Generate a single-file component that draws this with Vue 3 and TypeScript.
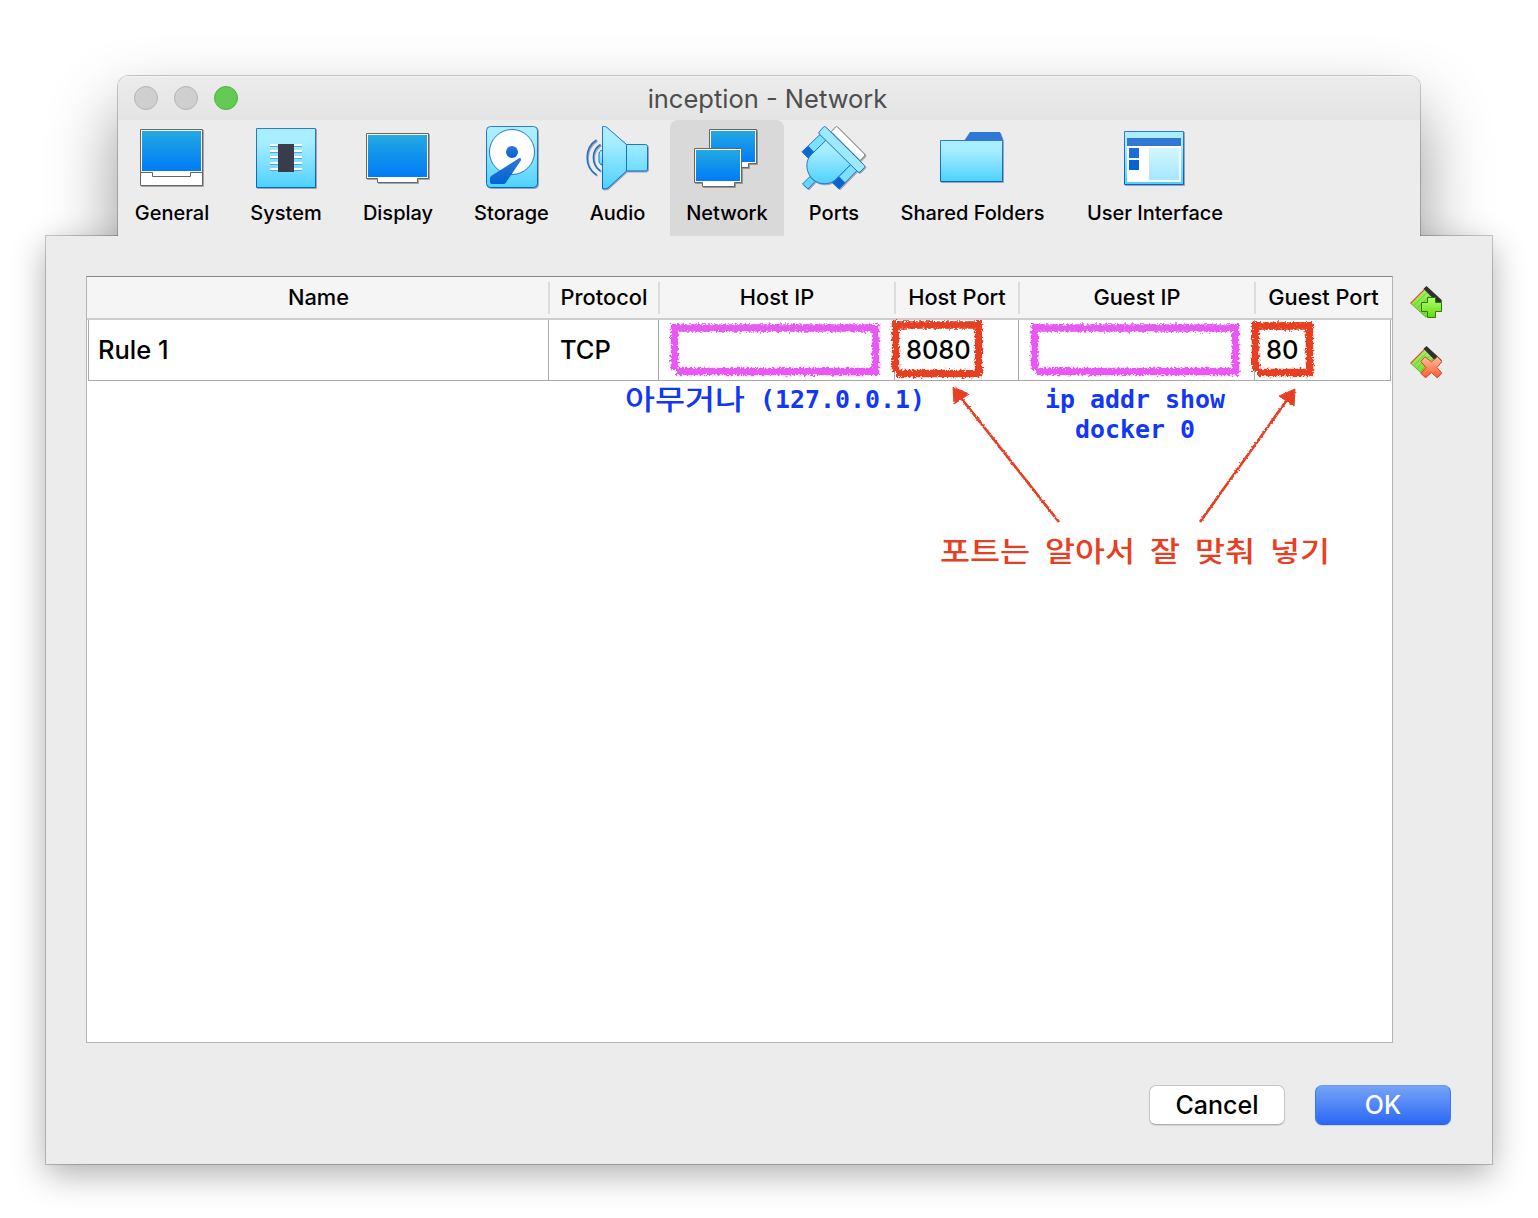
<script setup lang="ts">
interface Tab { id: string; label: string; width: number; gap: number; shift: number }
const tabs: Tab[] = [
  { id: 'general', label: 'General', width: 108, gap: 0, shift: 0 },
  { id: 'system', label: 'System', width: 110, gap: 5, shift: 0 },
  { id: 'display', label: 'Display', width: 104, gap: 5, shift: 0 },
  { id: 'storage', label: 'Storage', width: 111, gap: 6, shift: 0.5 },
  { id: 'audio', label: 'Audio', width: 101, gap: 0, shift: 0 },
  { id: 'network', label: 'Network', width: 114, gap: 2, shift: 0 },
  { id: 'ports', label: 'Ports', width: 100, gap: 0, shift: 0 },
  { id: 'folders', label: 'Shared Folders', width: 177, gap: 0, shift: -0.5 },
  { id: 'ui', label: 'User Interface', width: 168, gap: 10, shift: 0 },
]
const columns = ['Name', 'Protocol', 'Host IP', 'Host Port', 'Guest IP', 'Guest Port']
const rule = ['Rule 1', 'TCP', '', '8080', '', '80']

interface Note { text: string; x: number; y: number; w: number; kind: string }
const notes: Note[] = [
  { text: '아무거나', x: 625, y: 410, w: 120, kind: 'blue ko' },
  { text: '(127.0.0.1)', x: 760, y: 408, w: 165, kind: 'blue' },
  { text: 'ip addr show', x: 1045, y: 408, w: 180, kind: 'blue' },
  { text: 'docker 0', x: 1075, y: 438, w: 120, kind: 'blue' },
  { text: '포트는', x: 940, y: 562, w: 90, kind: 'red ko' },
  { text: '알아서', x: 1045, y: 562, w: 90, kind: 'red ko' },
  { text: '잘', x: 1150, y: 562, w: 30, kind: 'red ko' },
  { text: '맞춰', x: 1195, y: 562, w: 60, kind: 'red ko' },
  { text: '넣기', x: 1270, y: 562, w: 60, kind: 'red ko' },
]
interface Frame { x1: number; y1: number; x2: number; y2: number; color: string }
const frames: Frame[] = [
  { x1: 671, y1: 324, x2: 879, y2: 375, color: '#e957f4' },
  { x1: 1031, y1: 324, x2: 1239, y2: 375, color: '#e957f4' },
  { x1: 892, y1: 321, x2: 982, y2: 377, color: '#e83e22' },
  { x1: 1252, y1: 322, x2: 1313, y2: 376, color: '#e83e22' },
]
const frameStroke = (f: Frame): string =>
  `M${f.x1} ${f.y1 + 4}H${f.x2}M${f.x2 - 3.5} ${f.y1}V${f.y2}M${f.x2} ${f.y2 - 3.5}H${f.x1 + 5}M${f.x1 + 3.5} ${f.y1}V${f.y2 - 5}`
</script>

<template>
  <div class="page">
    <svg class="defs" width="0" height="0">
      <defs>
        <linearGradient id="screen" x1="0" y1="0" x2="0" y2="1"><stop offset="0" stop-color="#23a9e1" /><stop offset="1" stop-color="#007bf8" /></linearGradient>
        <linearGradient id="aqua" x1="0" y1="0" x2="0" y2="1"><stop offset="0" stop-color="#aaf0ff" /><stop offset=".25" stop-color="#a6edff" /><stop offset="1" stop-color="#4fd1ff" /></linearGradient>
        <linearGradient id="edge" x1="0" y1="0" x2="0" y2="1"><stop offset="0" stop-color="#2f78d3" /><stop offset="1" stop-color="#0064d2" /></linearGradient>
        <linearGradient id="pale" x1="0" y1="0" x2="0" y2="1"><stop offset="0" stop-color="#d2f6ff" /><stop offset="1" stop-color="#a6e7ff" /></linearGradient>
        <linearGradient id="lime" x1="0" y1="0" x2="0" y2="1"><stop offset="0" stop-color="#b0ff72" /><stop offset="1" stop-color="#66da0c" /></linearGradient>
        <linearGradient id="leaf" x1="0" y1="0" x2="0" y2="1"><stop offset="0" stop-color="#a6f36a" /><stop offset="1" stop-color="#74dc2c" /></linearGradient>
        <linearGradient id="coral" x1="0" y1="0" x2="0" y2="1"><stop offset="0" stop-color="#ffc09c" /><stop offset="1" stop-color="#ff5a30" /></linearGradient>
        <filter id="crayon" filterUnits="userSpaceOnUse" x="600" y="300" width="760" height="100" color-interpolation-filters="sRGB">
          <feTurbulence type="fractalNoise" baseFrequency=".45" numOctaves="3" seed="4" result="n" />
          <feDisplacementMap in="SourceGraphic" in2="n" scale="6" xChannelSelector="R" yChannelSelector="G" />
        </filter>
        <filter id="chalk" filterUnits="userSpaceOnUse" x="900" y="370" width="450" height="170" color-interpolation-filters="sRGB">
          <feTurbulence type="fractalNoise" baseFrequency=".5" numOctaves="2" seed="2" result="n" />
          <feDisplacementMap in="SourceGraphic" in2="n" scale="2.5" xChannelSelector="R" yChannelSelector="G" />
        </filter>
      </defs>
    </svg>

    <main class="dialog">
      <header class="window">
        <div class="titlebar">
          <div class="lights"><i></i><i></i><i class="zoom"></i></div>
          <span class="title">inception - Network</span>
        </div>
        <nav class="tabs">
          <button v-for="t in tabs" :key="t.id" class="tab" :class="{ active: t.id === 'network' }" :style="{ width: t.width + 'px', marginLeft: t.gap + 'px' }">
            <svg class="icon" viewBox="0 0 64 64" width="64" height="64" :style="{ marginLeft: t.shift * 2 + 'px' }">
              <template v-if="t.id === 'general'">
                <path d="M.5 3.5h62v56H.5z" fill="#fff" stroke="#666" />
                <path d="M.5 46.5h12v4h38v-4h12" fill="none" stroke="#666" />
                <path d="M2 5h59v40H2z" fill="url(#screen)" />
              </template>
              <template v-else-if="t.id === 'system'">
                <path d="M2.500 2.500h59v59h-59z" fill="url(#aqua)" stroke="url(#edge)" />
                <g v-for="n in 5" :key="n"><path :d="`M16 ${12 + n * 6}h32v2H16z`" fill="#fff" /><path :d="`M16 ${14 + n * 6}h32v1H16z`" fill="#5aa5dd" /></g>
                <path d="M24 18h16v28H24z" fill="#383d49" />
              </template>
              <template v-else-if="t.id === 'display'">
                <path d="M.5 7.5h62v45h-11v4h-40v-4H.5z" fill="#fff" stroke="#666" />
                <path d="M2 9h59v42H2z" fill="url(#screen)" />
              </template>
              <template v-else-if="t.id === 'storage'">
                <rect x="6.500" y=".5" width="51" height="61" rx="4" fill="url(#aqua)" stroke="url(#edge)" />
                <circle cx="32" cy="26" r="22.500" fill="#fff" stroke="#2a77d2" />
                <circle cx="32" cy="26" r="6" fill="url(#edge)" />
                <path d="M39 32.200q2.500-.5 2 2L26 56.500q-1 1.500-2.500 1.500H12q-2 0-2-2v-3.500q0-1.700 1.500-2.800z" fill="url(#edge)" />
              </template>
              <template v-else-if="t.id === 'audio'">
                <path d="M16.500 24.500h-1.500q-2 1-2 3.500v7q0 2.500 2 3.500h1.500z" fill="url(#aqua)" stroke="#1a6fd6" />
                <path d="M14.500 18.500C5 24 5 39 14.500 45M10.500 14C-2 22-2 41 10.500 49" fill="none" stroke="#1a6fd6" stroke-width="1.500" />
                <path d="M16.500.5h2q1.500 0 2.500 1L40.500 18.500h19q2 0 2 2v22.500q0 2-2 2h-19L22 62q-1 .8-2.500.8h-3z" fill="url(#aqua)" stroke="url(#edge)" />
                <path d="M40.500 18.500V45" stroke="#1a6fd6" />
              </template>
              <template v-else-if="t.id === 'network'">
                <g transform="translate(-1 0)">
                  <path d="M15.500 3.500h47v34h-8v4h-20v-4h-19z" fill="#fff" stroke="#666" /><path d="M17 5h44v31H17z" fill="url(#screen)" />
                  <path d="M.5 22.500h47v34h-7v4h-32v-4h-8z" fill="#fff" stroke="#666" /><path d="M2 24h44v31H2z" fill="url(#screen)" />
                </g>
              </template>
              <template v-else-if="t.id === 'ports'">
                <g transform="translate(-.5 0)">
                <path d="M34 1q1-1 2 0l27 27q1 1 0 2l-4.500 4.500L29.700 5.700z" fill="#fff" stroke="#777" />
                <g stroke="#1f73d5" stroke-linejoin="round">
                  <path d="M19 8 .7 25.700 6.700 32 24.700 14zM49.700 38 31.300 56.700 37.500 63 55.500 44.500z" fill="#7de0ff" />
                  <path d="M6.500 20 .7 25.700 6.700 32 12.500 26.300z" fill="#0f69d3" />
                  <path d="m8.500 50.500-7.500 7.500 5.500 5 7-7.500z" fill="#62d6ff" />
                  <path d="M24.700 14 49.700 38 35.500 52.300C30 59 18 60 11 53 4 46 3 34 11 27.500z" fill="url(#aqua)" />
                  <path d="M37.500 50.700l-6.500 6.100 6.500 6.200 6-6.200z" fill="#0664d2" />
                  <path d="M22 1q1-1 2.200 0L63 39.500q.8 1 0 2L58.500 46q-1 .8-2 0L17.800 8q-1-1.200 0-2.200z" fill="#9deaff" />
                </g>
                </g>
              </template>
              <template v-else-if="t.id === 'folders'">
                <path d="m24 15 6-9h30l3 8v1z" fill="#2f78d3" />
                <path d="M.5 14.500h62v41H.5z" fill="url(#aqua)" stroke="url(#edge)" />
              </template>
              <template v-else>
                <path d="M1.500 5.500h59v53h-59z" fill="url(#aqua)" stroke="url(#edge)" />
                <path d="M4 12h54v44H4z" fill="#fff" /><path d="M4 12h54v8H4z" fill="#3278d3" />
                <path d="M6 22h10v10H6z" fill="#1d70d3" /><path d="M6 34h10v10H6z" fill="#0664d2" />
                <path d="M26 22h30v32H26z" fill="url(#pale)" />
              </template>
            </svg>
            <span>{{ t.label }}</span>
          </button>
        </nav>
      </header>

      <section class="sheet">
        <div class="body">
          <div class="table">
            <div class="row head"><div v-for="c in columns" :key="c">{{ c }}</div></div>
            <div class="row rule"><div v-for="(c, i) in rule" :key="i">{{ c }}</div></div>
          </div>
          <aside class="tools">
            <svg v-for="kind in ['add', 'remove']" :key="kind" viewBox="0 0 32 32" width="32" height="32">
              <path d="M.7 17.300 15.500 2.500 30 16 16 31.300z" fill="url(#leaf)" stroke="#5f9a3a" stroke-width=".8" />
              <path d="m4 19.500 13-13M7 22.500l13-13M10 25.500l13-13M13 28.500l13-13" stroke="#62bd2e" stroke-width=".8" />
              <path d="M.5 17.300 15 2.800" stroke="#e04a30" stroke-width="1.200" />
              <path d="M13.500 2.800 16.500 0 31.700 14v2.500H27z" fill="#303030" />
              <path v-if="kind === 'add'" d="M17.500 11.500h8v5h6v9h-6v6h-8v-6h-6v-9h6z" fill="url(#lime)" stroke="#31790b" />
              <path v-else d="m15 10.800 6.500 5 6-5 4.500 4.700-5 6 5 5.800-4.800 4.500-5.700-5.300-6 5.300-4.700-4.500 5.200-5.800-5.200-6z" fill="url(#coral)" stroke="#cc3c22" stroke-width=".9" stroke-linejoin="round" />
            </svg>
          </aside>
        </div>
        <footer class="actions"><button class="btn">Cancel</button><button class="btn primary">OK</button></footer>
      </section>
    </main>

    <svg class="notes" viewBox="0 0 1538 1218" width="1538" height="1218">
      <g filter="url(#crayon)" fill="none" stroke-width="7.500"><path v-for="f in frames" :key="f.x1" :d="frameStroke(f)" :stroke="f.color" /></g>
      <g filter="url(#chalk)" stroke="#e83e22" fill="#e83e22">
        <path d="M1059 522 961 398M1200 522 1287 400" stroke-width="2.700" />
        <path d="m953 387 16 7-15 10zM1295 389l-16 7 15 10z" stroke-width="1" />
      </g>
      <text v-for="n in notes" :key="n.text" :x="n.x" :y="n.y" :textLength="n.w" lengthAdjust="spacingAndGlyphs" :class="n.kind">{{ n.text }}</text>
    </svg>
  </div>
</template>

<style>
body { margin: 0; background: #fff; }
</style>

<style scoped>
.page { position: relative; width: 1538px; height: 1218px; overflow: hidden; background: #fff; font-family: Inter, "Liberation Sans", sans-serif; color: #000; box-sizing: border-box; padding-top: 76px; }
.defs { position: absolute; }
.dialog { display: flex; flex-direction: column; align-items: center; }
.window { position: relative; z-index: 1; width: 1302px; height: 160px; background: #ececec; border-radius: 11px 11px 0 0; clip-path: inset(-100px -118px 0 -118px); }
.window::before { content: ""; position: absolute; z-index: -1; inset: 0 0 -500px; border-radius: 11px; box-shadow: 0 0 0 1px rgba(0,0,0,.2), 0 34px 68px rgba(0,0,0,.42); }
.titlebar { height: 44px; border-radius: 11px 11px 0 0; background: linear-gradient(#ececec, #e4e4e4); display: grid; grid-template-columns: 1fr auto 1fr; align-items: center; box-shadow: inset 0 1px #f4f4f4; }
.lights { display: flex; gap: 16px; padding-left: 16px; }
.lights i { width: 24px; height: 24px; box-sizing: border-box; border-radius: 50%; background: #cfcfcf; border: 1px solid #b5b5b5; }
.lights .zoom { background: #65c955; border-color: #52b040; }
.title { grid-column: 2; font-size: 25.500px; line-height: 30px; color: #4d4d4d; padding-top: 1px; margin-left: -3px; }
.tabs { display: flex; height: 116px; }
.tab { flex: none; display: flex; flex-direction: column; align-items: center; border: 0; margin: 0; padding: 6px 0 0; background: none; font: 550 20px/24px Inter, sans-serif; color: #000; white-space: nowrap; box-sizing: border-box; }
.tab span { margin-top: 11px; }
.tab.active { background: #d9d9d9; border-radius: 8px 8px 0 0; }
.icon { overflow: visible; filter: drop-shadow(1px 1px 0 rgba(0,0,0,.3)); }
.sheet { width: 1446px; height: 928px; box-sizing: border-box; padding: 40px 41px 0 40px; background: #ececec; box-shadow: 0 0 0 1px rgba(0,0,0,.2), 0 10px 32px rgba(0,0,0,.32); }
.body { display: flex; gap: 17px; }
.table { width: 1307px; height: 767px; box-sizing: border-box; border: 1px solid #b4b4b4; border-top-color: #8a8a8a; background: #fff; }
.row { display: grid; grid-template-columns: 461px 110px 236px 124px 236px 136px; padding-left: 1px; }
.head { height: 43px; box-sizing: border-box; background: #f5f5f5; border-bottom: 2px solid #cdcdcd; padding-top: 5px; font-size: 21.800px; font-weight: 530; }
.head div { height: 32px; line-height: 31px; text-align: center; border-right: 2px solid #dcdcdc; margin-right: -1px; padding-left: 1px; white-space: nowrap; }
.head div:last-child { border-right: 0; margin: 0; padding-left: 1px; }
.rule { height: 61px; font-size: 25.500px; font-weight: 480; }
.rule div { box-sizing: border-box; border-right: 1px solid #a9a9a9; border-bottom: 1px solid #a9a9a9; line-height: 60px; padding-left: 11px; white-space: nowrap; letter-spacing: -.1px; }
.rule div:first-child { border-left: 1px solid #a9a9a9; padding-left: 9px; letter-spacing: 0; }
.tools { display: flex; flex-direction: column; gap: 28px; padding-top: 10px; }
.tools svg { display: block; }
.actions { display: flex; justify-content: flex-end; gap: 30px; margin-top: 42px; }
.btn { width: 136px; height: 40px; border: 1px solid #c6c6c6; border-bottom-color: #aeaeae; border-radius: 7px; background: #fff; font: 500 25px/36px Inter, sans-serif; padding: 0; box-shadow: 0 1px 1px rgba(0,0,0,.1); color: #000; }
.btn.primary { background: linear-gradient(#76a3f6, #2b68f6); border-color: #6a9af3 #3f77f0 #2862ee; color: #fff; }
.notes { position: absolute; z-index: 2; left: 0; top: 0; pointer-events: none; }
.notes text { font: 700 25px "DejaVu Sans Mono", monospace; white-space: pre; }
.notes .ko { font: 500 28px "Noto Sans CJK KR", sans-serif; }
.blue { fill: #1238f5; }
.red { fill: #e83e22; }
</style>
